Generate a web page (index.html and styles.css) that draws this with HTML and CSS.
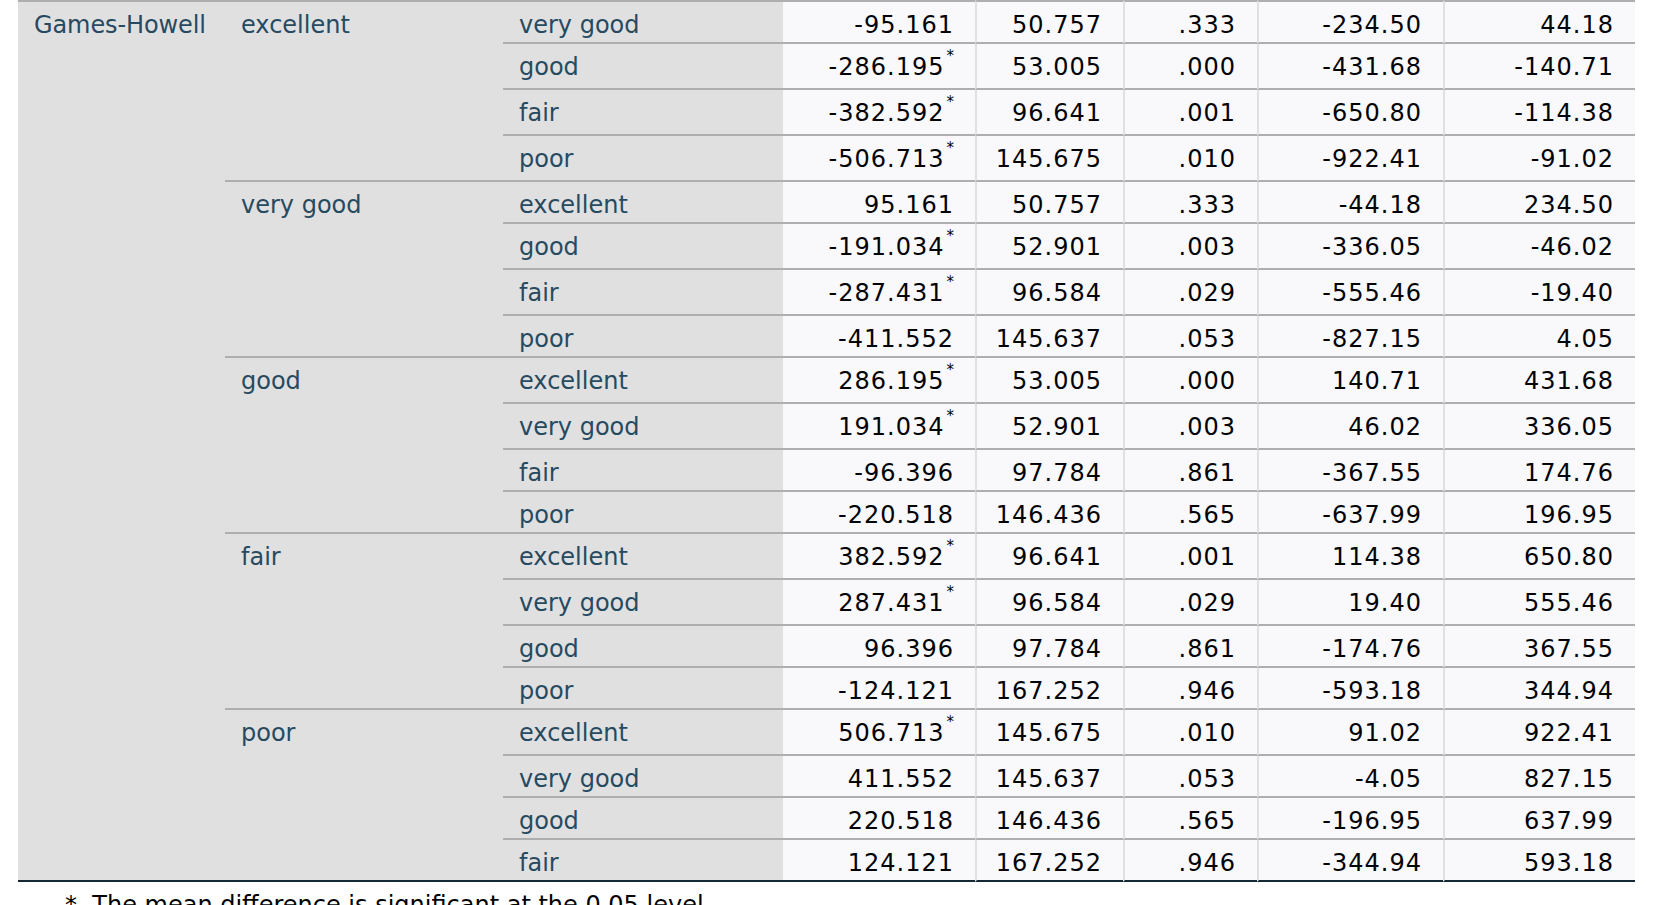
FILE: index.html
```html
<!DOCTYPE html>
<html lang="en">
<head>
<meta charset="utf-8">
<title>Multiple Comparisons</title>
<link rel="stylesheet" href="styles.css">
</head>
<body>
<div class="pivot">
<table class="grid">
<colgroup>
<col class="w-a"><col class="w-b"><col class="w-c"><col class="w-d"><col class="w-e"><col class="w-f"><col class="w-g"><col class="w-h">
</colgroup>
<tbody>
<tr><td class="a" rowspan="4">Games-Howell</td><td class="b" rowspan="4">excellent</td><td class="c">very good</td><td class="num">-95.161</td><td class="num sep">50.757</td><td class="num sep">.333</td><td class="num sep">-234.50</td><td class="num sep">44.18</td></tr>
<tr><td class="c">good</td><td class="num">-286.195<sup>*</sup></td><td class="num sep">53.005</td><td class="num sep">.000</td><td class="num sep">-431.68</td><td class="num sep">-140.71</td></tr>
<tr><td class="c">fair</td><td class="num">-382.592<sup>*</sup></td><td class="num sep">96.641</td><td class="num sep">.001</td><td class="num sep">-650.80</td><td class="num sep">-114.38</td></tr>
<tr><td class="c">poor</td><td class="num">-506.713<sup>*</sup></td><td class="num sep">145.675</td><td class="num sep">.010</td><td class="num sep">-922.41</td><td class="num sep">-91.02</td></tr>
</tbody>
<tbody>
<tr><td class="a" rowspan="4"></td><td class="b" rowspan="4">very good</td><td class="c">excellent</td><td class="num">95.161</td><td class="num sep">50.757</td><td class="num sep">.333</td><td class="num sep">-44.18</td><td class="num sep">234.50</td></tr>
<tr><td class="c">good</td><td class="num">-191.034<sup>*</sup></td><td class="num sep">52.901</td><td class="num sep">.003</td><td class="num sep">-336.05</td><td class="num sep">-46.02</td></tr>
<tr><td class="c">fair</td><td class="num">-287.431<sup>*</sup></td><td class="num sep">96.584</td><td class="num sep">.029</td><td class="num sep">-555.46</td><td class="num sep">-19.40</td></tr>
<tr><td class="c">poor</td><td class="num">-411.552</td><td class="num sep">145.637</td><td class="num sep">.053</td><td class="num sep">-827.15</td><td class="num sep">4.05</td></tr>
</tbody>
<tbody>
<tr><td class="a" rowspan="4"></td><td class="b" rowspan="4">good</td><td class="c">excellent</td><td class="num">286.195<sup>*</sup></td><td class="num sep">53.005</td><td class="num sep">.000</td><td class="num sep">140.71</td><td class="num sep">431.68</td></tr>
<tr><td class="c">very good</td><td class="num">191.034<sup>*</sup></td><td class="num sep">52.901</td><td class="num sep">.003</td><td class="num sep">46.02</td><td class="num sep">336.05</td></tr>
<tr><td class="c">fair</td><td class="num">-96.396</td><td class="num sep">97.784</td><td class="num sep">.861</td><td class="num sep">-367.55</td><td class="num sep">174.76</td></tr>
<tr><td class="c">poor</td><td class="num">-220.518</td><td class="num sep">146.436</td><td class="num sep">.565</td><td class="num sep">-637.99</td><td class="num sep">196.95</td></tr>
</tbody>
<tbody>
<tr><td class="a" rowspan="4"></td><td class="b" rowspan="4">fair</td><td class="c">excellent</td><td class="num">382.592<sup>*</sup></td><td class="num sep">96.641</td><td class="num sep">.001</td><td class="num sep">114.38</td><td class="num sep">650.80</td></tr>
<tr><td class="c">very good</td><td class="num">287.431<sup>*</sup></td><td class="num sep">96.584</td><td class="num sep">.029</td><td class="num sep">19.40</td><td class="num sep">555.46</td></tr>
<tr><td class="c">good</td><td class="num">96.396</td><td class="num sep">97.784</td><td class="num sep">.861</td><td class="num sep">-174.76</td><td class="num sep">367.55</td></tr>
<tr><td class="c">poor</td><td class="num">-124.121</td><td class="num sep">167.252</td><td class="num sep">.946</td><td class="num sep">-593.18</td><td class="num sep">344.94</td></tr>
</tbody>
<tbody>
<tr><td class="a" rowspan="4"></td><td class="b" rowspan="4">poor</td><td class="c">excellent</td><td class="num">506.713<sup>*</sup></td><td class="num sep">145.675</td><td class="num sep">.010</td><td class="num sep">91.02</td><td class="num sep">922.41</td></tr>
<tr><td class="c">very good</td><td class="num">411.552</td><td class="num sep">145.637</td><td class="num sep">.053</td><td class="num sep">-4.05</td><td class="num sep">827.15</td></tr>
<tr><td class="c">good</td><td class="num">220.518</td><td class="num sep">146.436</td><td class="num sep">.565</td><td class="num sep">-196.95</td><td class="num sep">637.99</td></tr>
<tr><td class="c">fair</td><td class="num">124.121</td><td class="num sep">167.252</td><td class="num sep">.946</td><td class="num sep">-344.94</td><td class="num sep">593.18</td></tr>
</tbody>
<tfoot>
<tr><td class="note" colspan="8">*. The mean difference is significant at the 0.05 level.</td></tr>
</tfoot>
</table>
</div>
</body>
</html>
```

FILE: styles.css
```css
html {
  overflow: hidden;
}

* {
  box-sizing: border-box;
}

body {
  margin: 0;
  background: #ffffff;
  font-family: "DejaVu Sans", "Liberation Sans", sans-serif;
}

.pivot {
  padding-left: 18px;
}

.grid {
  width: 1617px;
  table-layout: fixed;
  border-collapse: separate;
  border-spacing: 0;
  font-size: 24px;
  line-height: 28px;
}

.w-a { width: 207px; }
.w-b { width: 278px; }
.w-c { width: 280px; }
.w-d { width: 192px; }
.w-e { width: 148px; }
.w-f { width: 134px; }
.w-g { width: 186px; }
.w-h { width: 192px; }

.grid tbody td {
  padding: 9px 16px 3px 16px;
  vertical-align: top;
  white-space: nowrap;
}

.grid tbody:first-of-type tr:first-child td {
  border-top: 2px solid #aeaeae;
}

.a,
.b,
.c {
  background: #e0e0e0;
  color: #264a60;
  text-align: left;
}

.a {
  letter-spacing: -0.1px;
}

.b,
.c,
.num {
  border-bottom: 2px solid #aeaeae;
}

.grid tbody:last-of-type .a,
.grid tbody:last-of-type .b,
.grid tbody:last-of-type tr:last-child td {
  border-bottom: 2px solid #152935;
}

.grid tbody td.num {
  background: #f9f9fb;
  color: #010205;
  text-align: right;
  padding-right: 21px;
  letter-spacing: 1px;
}

.num.sep {
  border-left: 2px solid #e0e0e0;
}

.grid tbody tr:has(sup) td.c,
.grid tbody tr:has(sup) td.num {
  padding-bottom: 7px;
}

.num sup {
  font-size: 15px;
  line-height: 0;
  vertical-align: 14px;
  letter-spacing: 0;
  margin-left: 2px;
}

.note {
  padding: 9px 0 4px 47px;
  color: #010205;
  font-size: 24px;
  line-height: 28px;
  white-space: nowrap;
}
```
